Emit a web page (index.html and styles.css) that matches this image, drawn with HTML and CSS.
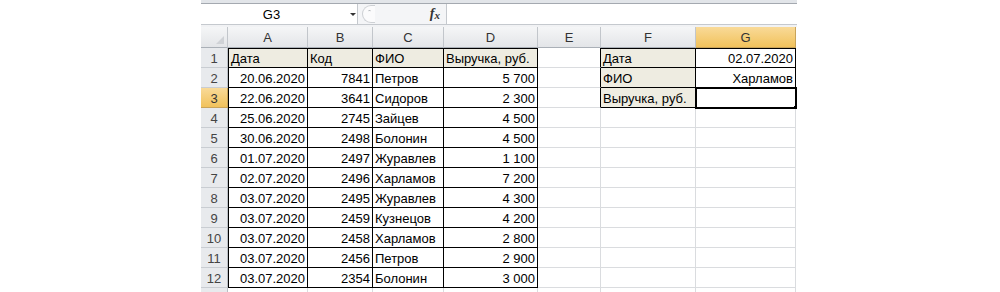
FILE: index.html
```html
<!DOCTYPE html>
<html lang="ru">
<head>
<meta charset="utf-8">
<title>Excel</title>
<link rel="stylesheet" href="styles.css">
</head>
<body>
<div class="excel">
  <div class="topband"></div>
  <div class="fbar">
    <div class="namebox"><span class="ref">G3</span><span class="arrow"></span></div>
    <div class="fxzone"><span class="knob"><span class="dot"></span></span><span class="fx">f<sub>x</sub></span></div>
    <div class="finput"></div>
  </div>
  <div class="gap"></div>
  <div class="sheet">
    <div class="h corner"><span class="tri"></span></div>
    <div class="h">A</div>
    <div class="h">B</div>
    <div class="h">C</div>
    <div class="h">D</div>
    <div class="h">E</div>
    <div class="h">F</div>
    <div class="h sel">G</div>

    <div class="rh">1</div>
    <div class="c bg t tl tt">Дата</div>
    <div class="c bg t tt">Код</div>
    <div class="c bg t tt">ФИО</div>
    <div class="c bg t tt">Выручка, руб.</div>
    <div class="c er"></div>
    <div class="c bg t tt">Дата</div>
    <div class="c r t tt">02.07.2020</div>

    <div class="rh">2</div>
    <div class="c r t tl">20.06.2020</div>
    <div class="c r t">7841</div>
    <div class="c t">Петров</div>
    <div class="c r t">5 700</div>
    <div class="c er"></div>
    <div class="c bg t">ФИО</div>
    <div class="c r t">Харламов</div>

    <div class="rh sel">3</div>
    <div class="c r t tl">22.06.2020</div>
    <div class="c r t">3641</div>
    <div class="c t">Сидоров</div>
    <div class="c r t">2 300</div>
    <div class="c er"></div>
    <div class="c bg t">Выручка, руб.</div>
    <div class="c t cur"></div>

    <div class="rh">4</div>
    <div class="c r t tl">25.06.2020</div>
    <div class="c r t">2745</div>
    <div class="c t">Зайцев</div>
    <div class="c r t">4 500</div>
    <div class="c"></div>
    <div class="c"></div>
    <div class="c"></div>

    <div class="rh">5</div>
    <div class="c r t tl">30.06.2020</div>
    <div class="c r t">2498</div>
    <div class="c t">Болонин</div>
    <div class="c r t">4 500</div>
    <div class="c"></div>
    <div class="c"></div>
    <div class="c"></div>

    <div class="rh">6</div>
    <div class="c r t tl">01.07.2020</div>
    <div class="c r t">2497</div>
    <div class="c t">Журавлев</div>
    <div class="c r t">1 100</div>
    <div class="c"></div>
    <div class="c"></div>
    <div class="c"></div>

    <div class="rh">7</div>
    <div class="c r t tl">02.07.2020</div>
    <div class="c r t">2496</div>
    <div class="c t">Харламов</div>
    <div class="c r t">7 200</div>
    <div class="c"></div>
    <div class="c"></div>
    <div class="c"></div>

    <div class="rh">8</div>
    <div class="c r t tl">03.07.2020</div>
    <div class="c r t">2495</div>
    <div class="c t">Журавлев</div>
    <div class="c r t">4 300</div>
    <div class="c"></div>
    <div class="c"></div>
    <div class="c"></div>

    <div class="rh">9</div>
    <div class="c r t tl">03.07.2020</div>
    <div class="c r t">2459</div>
    <div class="c t">Кузнецов</div>
    <div class="c r t">4 200</div>
    <div class="c"></div>
    <div class="c"></div>
    <div class="c"></div>

    <div class="rh">10</div>
    <div class="c r t tl">03.07.2020</div>
    <div class="c r t">2458</div>
    <div class="c t">Харламов</div>
    <div class="c r t">2 800</div>
    <div class="c"></div>
    <div class="c"></div>
    <div class="c"></div>

    <div class="rh">11</div>
    <div class="c r t tl">03.07.2020</div>
    <div class="c r t">2456</div>
    <div class="c t">Петров</div>
    <div class="c r t">2 900</div>
    <div class="c"></div>
    <div class="c"></div>
    <div class="c"></div>

    <div class="rh">12</div>
    <div class="c r t tl">03.07.2020</div>
    <div class="c r t">2354</div>
    <div class="c t">Болонин</div>
    <div class="c r t">3 000</div>
    <div class="c"></div>
    <div class="c"></div>
    <div class="c"></div>

    <div class="rh"></div>
    <div class="c"></div>
    <div class="c"></div>
    <div class="c"></div>
    <div class="c"></div>
    <div class="c"></div>
    <div class="c"></div>
    <div class="c"></div>
  </div>
</div>
</body>
</html>
```

FILE: styles.css
```css
html, body {
  margin: 0;
  padding: 0;
  overflow: hidden;
  background: #fff;
}
body {
  font-family: "Liberation Sans", Arial, sans-serif;
  font-size: 13px;
  color: #000;
}
.excel {
  margin-left: 201px;
  width: 596px;
  background: #eef0f2;
}
.topband {
  height: 3px;
  background: #e2e5e9;
}
.fbar {
  display: flex;
  height: 22px;
  box-sizing: border-box;
  border-top: 1px solid #a4a9b0;
  border-bottom: 1px solid #c5c9ce;
}
.namebox {
  width: 157px;
  display: flex;
  align-items: center;
  background: #fff;
  border-right: 1px solid #c5c9ce;
  box-sizing: border-box;
}
.ref {
  width: 141px;
  text-align: center;
}
.arrow {
  margin-left: 8px;
  width: 0;
  height: 0;
  border-left: 3px solid transparent;
  border-right: 3px solid transparent;
  border-top: 3px solid #333;
}
.fxzone {
  width: 89px;
  display: flex;
  align-items: center;
  background: #f4f5f7;
  border-right: 1px solid #c5c9ce;
  box-sizing: border-box;
}
.knob {
  margin-left: 4px;
  width: 13px;
  height: 18px;
  box-sizing: border-box;
  border: 1px solid #cdd0d4;
  border-right: none;
  border-radius: 9px 0 0 9px;
  background: #fbfbfc;
  display: flex;
  justify-content: center;
  padding-top: 4px;
}
.dot {
  width: 3px;
  height: 2px;
  border-top: 1px solid #b0b4b9;
  border-radius: 2px 2px 0 0;
}
.fx {
  margin-left: auto;
  margin-right: 6px;
  font-family: "Liberation Serif", "Times New Roman", serif;
  font-style: italic;
  font-weight: bold;
  font-size: 14px;
  color: #333;
  line-height: 14px;
}
.fx sub {
  font-size: 11px;
  vertical-align: -1px;
}
.finput {
  flex: 1;
  background: #fff;
}
.gap {
  height: 2px;
  background: #f1f2f4;
}
.sheet {
  display: grid;
  grid-template-columns: 27px 80px 65px 71px 94px 63px 95px 100px;
  grid-template-rows: 21px;
  grid-auto-rows: 20px;
  background: #fff;
}
.h, .rh, .c {
  box-sizing: border-box;
  display: flex;
  align-items: center;
  white-space: nowrap;
  overflow: hidden;
}
.h {
  justify-content: center;
  background: linear-gradient(#f5f6f7, #e3e5e8);
  border-right: 1px solid #c2c6cb;
  border-bottom: 1px solid #aab0b7;
  color: #333;
  padding-top: 1px;
}
.corner {
  justify-content: flex-end;
  align-items: flex-end;
  padding: 0 3px 3px 0;
}
.tri {
  width: 0;
  height: 0;
  border-left: 8px solid transparent;
  border-bottom: 8px solid #cfd2d6;
}
.h.sel, .rh.sel {
  background: linear-gradient(#f9da98, #f1c25c);
  border-right-color: #c9a45a;
  border-bottom-color: #c9a45a;
  color: #333;
}
.rh {
  justify-content: center;
  background: #e8eaed;
  border-right: 1px solid #b9bec4;
  border-bottom: 1px solid #c9cdd2;
  color: #444;
  padding-top: 1px;
}
.c {
  padding: 1px 2px 0 2px;
  border-right: 1px solid #dadcdf;
  border-bottom: 1px solid #dadcdf;
}
.r { justify-content: flex-end; }
.bg { background: #eeece1; }
.t {
  border-right-color: #000;
  border-bottom-color: #000;
}
.tl { border-left: 1px solid #000; }
.tt { border-top: 1px solid #000; }
.er { border-right-color: #000; }
.cur {
  position: relative;
  z-index: 1;
  outline: 2px solid #000;
  outline-offset: -1px;
}
.cur::after {
  content: "";
  position: absolute;
  right: -4px;
  bottom: -4px;
  width: 4px;
  height: 4px;
  background: #000;
  border: 1px solid #fff;
}
```
